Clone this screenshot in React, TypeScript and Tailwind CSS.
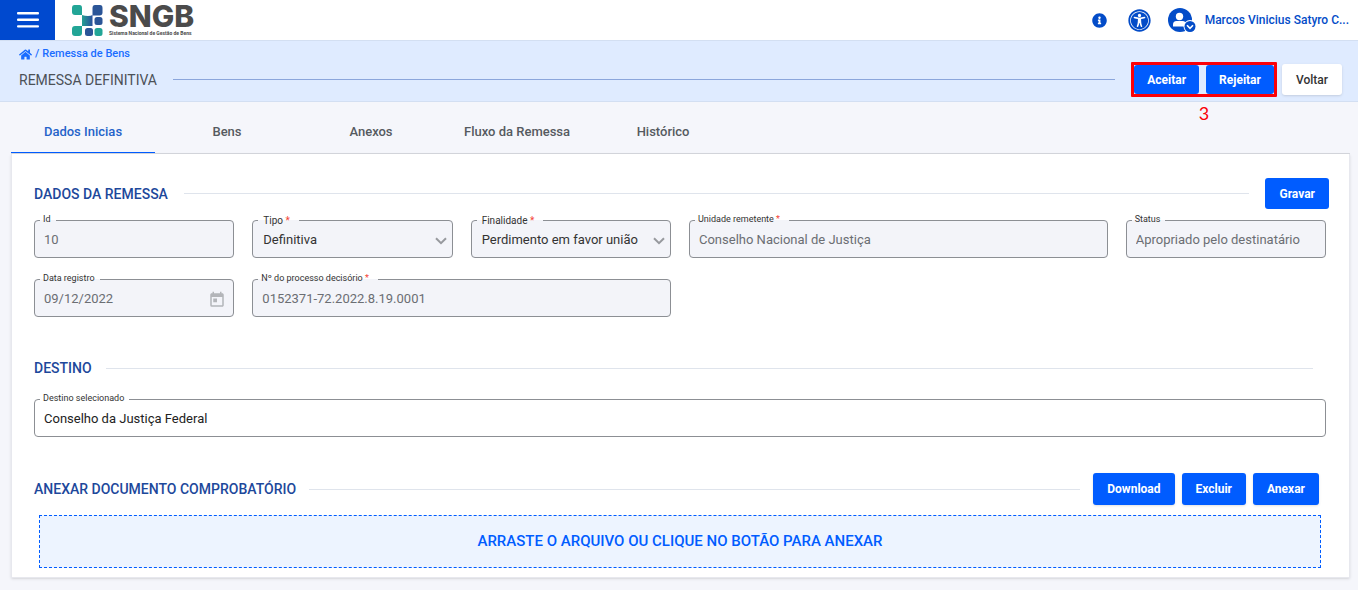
import { useState, type ReactNode } from "react";
import { FaHome, FaInfoCircle, FaUniversalAccess } from "react-icons/fa";
import { MdToday } from "react-icons/md";
import clsx from "clsx";

interface FieldProps {
  id: string;
  label: string;
  required?: boolean;
  editable?: boolean;
  wide?: boolean;
  select?: boolean;
  children: ReactNode;
}

const tabs = ["Dados Inicias", "Bens", "Anexos", "Fluxo da Remessa", "Histórico"];

const inputClass = "block h-[26px] w-full bg-transparent pl-[9px] pr-3 text-[13px] outline-none";

const Field = ({ id, label, required, editable, wide, select, children }: FieldProps) => (
  <fieldset
    className={clsx(
      "relative h-[43px] min-w-0 rounded border border-[#8c8f94]",
      editable ? "bg-white" : "bg-[#f3f4f9]",
      wide && "col-span-2"
    )}
  >
    <legend
      className={clsx(
        "ml-[5px] h-[11px] pr-[5px] text-[#333]",
        select ? "pl-[5px] text-[10px] leading-[12px]" : "pl-[3px] text-[9px] leading-[9px]"
      )}
    >
      <label htmlFor={id} className="block">
        {label}
        {required && <span className="pr-1 text-[#f44336]"> *</span>}
      </label>
    </legend>
    {children}
  </fieldset>
);

const SelectField = ({ id, label, options }: { id: string; label: string; options: string[] }) => (
  <Field id={id} label={label} required select>
    <select
      id={id}
      className="block h-7 w-full appearance-none bg-transparent pl-[10px] pr-8 text-[13px] text-[#333] outline-none"
    >
      {options.map((option) => (
        <option key={option}>{option}</option>
      ))}
    </select>
    <svg
      className="pointer-events-none absolute right-[5px] top-[11px]"
      width="12"
      height="8"
      viewBox="0 0 12 8"
      fill="none"
      stroke="#97999e"
      strokeWidth="2"
    >
      <path d="M1 1.2 L6 6.2 L11 1.2" />
    </svg>
  </Field>
);

const Button = ({ children, className }: { children: ReactNode; className?: string }) => (
  <button
    type="button"
    className={clsx(
      "flex items-center justify-center rounded-[3px] bg-[#005cff] text-[12px] font-bold text-white",
      className
    )}
  >
    {children}
  </button>
);

const Logo = () => (
  <a href="#" aria-label="SNGB" className="ml-4 flex items-start gap-[5px]">
    <svg width="33" height="33" viewBox="0 0 33 33">
      <defs>
        <linearGradient id="mark" x1="0" x2="1">
          <stop offset="0" stopColor="#23a092" />
          <stop offset="1" stopColor="#2a4f9c" />
        </linearGradient>
      </defs>
      <path d="M3.5 1H8.5Q11 1 11 4V11H4Q1 11 1 8V4Q1 1 3.5 1Z" fill="#22a596" />
      <path d="M24 1H29Q31.500 1 31.500 4V8.500Q31.500 11.500 28.500 11.500H21.500V4Q21.500 1 24 1Z" fill="#2b5597" />
      <path d="M11 11Q14 12 17 12Q20 12 21.500 11V22H11Z" fill="url(#mark)" />
      <path d="M4 22H11V29Q11 32 8 32H4Q1 32 1 29V25Q1 22 4 22Z" fill="#22a596" />
      <rect x="23.500" y="13" width="8" height="8" rx="2.500" fill="#2b5597" />
      <rect x="14" y="24" width="8" height="8" rx="2.500" fill="#2b5597" />
      <rect x="23.500" y="24" width="8" height="8" rx="2.500" fill="#22a596" />
    </svg>
    <span className="flex flex-col text-[#4b4b4b]">
      <span className="font-['Inter'] text-[30px] font-extrabold leading-[25px]">SNGB</span>
      <span className="text-[5px] font-bold leading-[8px]">
        Sistema Nacional de Gestão de Bens
      </span>
    </span>
  </a>
);

const UserIcon = () => (
  <svg width="29" height="25" viewBox="0 0 29 25">
    <circle cx="12" cy="12" r="12" fill="#034cc8" />
    <circle cx="11.500" cy="8.500" r="3.700" fill="#fff" />
    <path d="M5 18.500V16.500Q5 13 8.500 13H14.500Q18 13 18 16.500V18.500Z" fill="#fff" />
    <circle cx="22" cy="18.500" r="6.500" fill="#fff" />
    <circle cx="22" cy="18.500" r="5.500" fill="#034cc8" />
    <path d="M19 17.300L22 20.300L25 17.300" fill="none" stroke="#fff" strokeWidth="1.600" />
  </svg>
);

const Header = () => (
  <header className="flex h-[41px] items-center border-b border-[#d3dff2] bg-white">
    <button
      type="button"
      aria-label="Menu"
      className="flex h-10 w-[55px] items-center justify-center bg-[#0049cf]"
    >
      <svg width="22" height="16" viewBox="0 0 22 16" fill="#fff">
        <rect y="0" width="22" height="2.400" rx="1" />
        <rect y="6.600" width="22" height="2.400" rx="1" />
        <rect y="13.200" width="22" height="2.400" rx="1" />
      </svg>
    </button>
    <Logo />
    <div className="ml-auto flex items-center pr-[9px] text-[#034cc8]">
      <button type="button" aria-label="Informações" className="mr-[21px]">
        <FaInfoCircle size={15} />
      </button>
      <button type="button" aria-label="Acessibilidade" className="mr-[17px]">
        <FaUniversalAccess size={23} />
      </button>
      <button type="button" className="flex items-center gap-2">
        <UserIcon />
        <span className="text-[12px] font-medium">Marcos Vinicius Satyro C...</span>
      </button>
    </div>
  </header>
);

const SectionTitle = ({ children }: { children: ReactNode }) => (
  <h2 className="text-[14px] font-medium leading-5 text-[#1d489b]">{children}</h2>
);

export default function App() {
  const [active, setActive] = useState(tabs[0]);

  return (
    <div className="min-h-screen bg-[#f5f6fb] font-['Roboto',sans-serif] text-[#4c5157]">
      <Header />

      <div className="h-[61px] border-b border-[#d3dff2] bg-[#dfebff] pl-[19px] pr-4">
        <nav className="flex h-[21px] items-center gap-[3px] pt-[6px] text-[11px] font-medium text-[#1a6dff]">
          <a href="#" aria-label="Início">
            <FaHome size={13} />
          </a>
          <span>/</span>
          <a href="#">Remessa de Bens</a>
        </nav>
        <div className="flex items-center">
          <h1 className="text-[14px] leading-5">REMESSA DEFINITIVA</h1>
          <div className="mx-4 h-px flex-1 bg-[#8ba6dc]" />
          <div className="relative flex gap-[7px] rounded-[1px] border-3 border-[#fb0007]">
            <Button className="h-[29px] px-[13px]">Aceitar</Button>
            <Button className="h-[29px] px-[13px]">Rejeitar</Button>
            <span className="absolute left-0 top-full w-full pt-[9px] text-center font-['Lato'] text-[18px] leading-5 text-[#fb0007]">
              3
            </span>
          </div>
          <button
            type="button"
            className="ml-[5px] h-[31px] rounded-[3px] bg-white px-[14px] text-[12px] font-medium text-[#333] shadow-sm"
          >
            Voltar
          </button>
        </div>
      </div>

      <main className="pb-3 pl-[11px] pr-2">
        <div role="tablist" className="flex h-[52px] border-b border-[#d6d8de]">
          {tabs.map((tab) => (
            <button
              key={tab}
              type="button"
              role="tab"
              aria-selected={tab === active}
              onClick={() => setActive(tab)}
              className={clsx(
                "min-w-36 border-b px-[21px] pt-[10px] text-[13px] font-medium",
                tab === active
                  ? "border-[#005cff] text-[#2563c9]"
                  : "border-transparent text-[#555a60]"
              )}
            >
              {tab}
            </button>
          ))}
        </div>

        <section className="border border-t-0 border-[#e7e8ee] bg-white pb-[9px] pl-[22px] pr-[23px] pt-6 shadow-sm">
          <div className="-mr-[3px] mb-[6px] flex items-center gap-4">
            <SectionTitle>DADOS DA REMESSA</SectionTitle>
            <div className="h-px flex-1 bg-[#dfe4ec]" />
            <Button className="h-[31px] px-[14px]">Gravar</Button>
          </div>
          <div className="grid grid-cols-6 gap-x-[18px] gap-y-4">
            <Field id="id" label="Id">
              <input id="id" readOnly defaultValue="10" className={clsx(inputClass, "text-[#6b6e73]")} />
            </Field>
            <SelectField id="tipo" label="Tipo" options={["Definitiva"]} />
            <SelectField
              id="finalidade"
              label="Finalidade"
              options={["Perdimento em favor união"]}
            />
            <Field id="unidade" label="Unidade remetente" required wide>
              <input
                id="unidade"
                readOnly
                defaultValue="Conselho Nacional de Justiça"
                className={clsx(inputClass, "text-[#6b6e73]")}
              />
            </Field>
            <Field id="status" label="Status">
              <input
                id="status"
                readOnly
                defaultValue="Apropriado pelo destinatário"
                className={clsx(inputClass, "text-[#6b6e73]")}
              />
            </Field>
            <Field id="data" label="Data registro">
              <input id="data" readOnly defaultValue="09/12/2022" className={clsx(inputClass, "text-[#6b6e73]")} />
              <MdToday size={18} className="absolute right-[7px] top-[6px] text-[#b3b5b9]" />
            </Field>
            <Field id="processo" label="Nº do processo decisório" required wide>
              <input
                id="processo"
                readOnly
                defaultValue="0152371-72.2022.8.19.0001"
                className={clsx(inputClass, "text-[#6b6e73]")}
              />
            </Field>
          </div>

          <div className="mb-4 mt-[41px] flex items-center gap-[14px] pr-[13px]">
            <SectionTitle>DESTINO</SectionTitle>
            <div className="h-px flex-1 bg-[#dfe4ec]" />
          </div>
          <Field id="destino" label="Destino selecionado" editable>
            <input
              id="destino"
              defaultValue="Conselho da Justiça Federal"
              className={clsx(inputClass, "text-[#222]")}
            />
          </Field>

          <div className="mb-[10px] mt-9 flex items-center gap-[7px] pr-[7px]">
            <SectionTitle>ANEXAR DOCUMENTO COMPROBATÓRIO</SectionTitle>
            <div className="mx-[6px] h-px flex-1 bg-[#dfe4ec]" />
            <Button className="h-8 px-[14px] shadow">Download</Button>
            <Button className="h-8 px-[14px] shadow">Excluir</Button>
            <Button className="h-8 px-[14px] shadow">Anexar</Button>
          </div>
          <div className="mx-[5px] flex h-[53px] items-center justify-center border border-dashed border-[#005cff] bg-[#edf4ff] text-[15px] font-medium text-[#005cff]">
            ARRASTE O ARQUIVO OU CLIQUE NO BOTÃO PARA ANEXAR
          </div>
        </section>
      </main>
    </div>
  );
}
